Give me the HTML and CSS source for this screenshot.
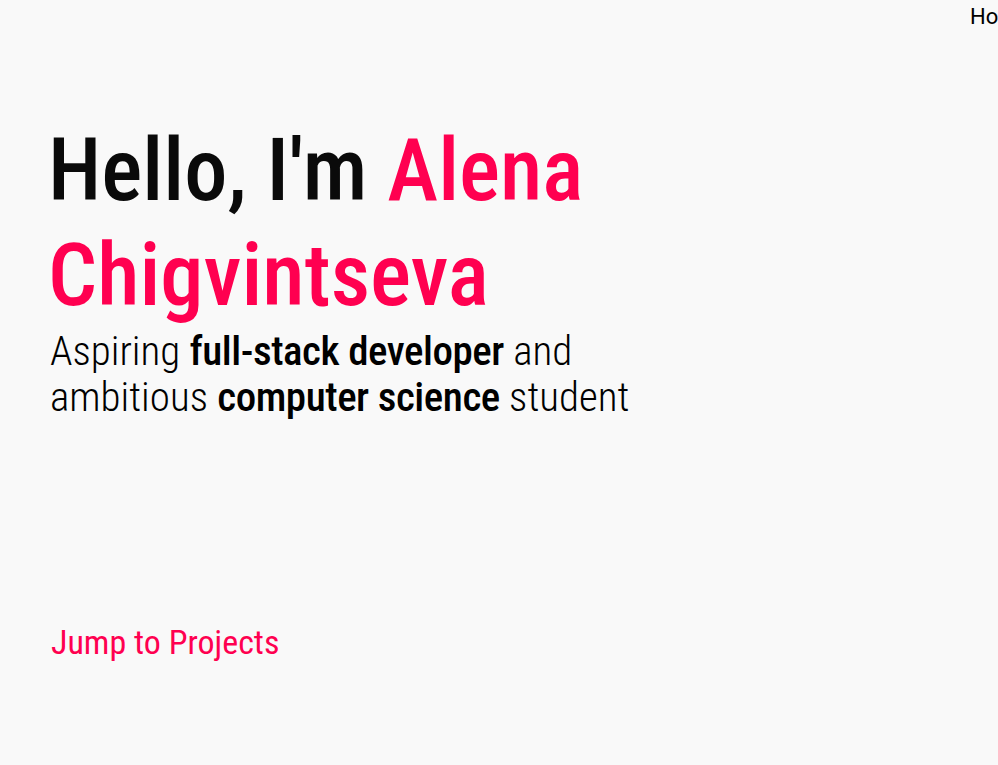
FILE: index.html
```html
<!DOCTYPE html>
<html lang="en">
<head>
    <meta charset="UTF-8">
    <meta name="viewport" content="width=device-width, initial-scale=1.0">
    <title>Alena Chigvintseva</title>
    <link rel="stylesheet" href="styles.css">
</head>
<body>
    <header class="topbar">
        <nav>
            <ul class="nav-links">
                <li><a href="#">Home</a></li>
                <li><a href="#projects">Projects</a></li>
                <li><a href="#contact">Contact</a></li>
            </ul>
        </nav>
    </header>

    <main>
        <!-- Intro -->
        <section class="intro">
            <h1>Hello, I'm <span class="accent">Alena Chigvintseva</span></h1>
            <p class="tagline">Aspiring <strong>full-stack developer</strong> and ambitious <strong>computer science</strong> student</p>
        </section>

        <a class="jump" href="#projects">Jump to Projects</a>
    </main>
</body>
</html>
```

FILE: styles.css
```css
/* General */
body {
    font-family: 'Roboto Condensed', 'Roboto', sans-serif;
    font-stretch: condensed;
    background-color: #f9f9f9;
    color: #000000;
    margin: 0;
    overflow-x: hidden;
}

a {
    text-decoration: none;
    color: inherit;
}

/* Top navigation */
.topbar {
    padding: 4px 0 0 970px;
    white-space: nowrap;
}

.nav-links {
    display: flex;
    gap: 24px;
    list-style: none;
    margin: 0;
    padding: 0;
    font-family: 'Roboto', sans-serif;
    font-stretch: normal;
    font-size: 22px;
    line-height: 26px;
}

/* Intro */
main {
    padding: 0 48px;
}

.intro {
    padding-top: 88px;
    max-width: 600px;
}

h1 {
    font-size: 86.5px;
    line-height: 105px;
    font-weight: 500;
    margin: 0;
    color: #0a0a0a;
}

.accent {
    color: #ff0050;
}

.tagline {
    font-size: 41px;
    line-height: 46px;
    font-weight: 300;
    margin: 0 0 0 2px;
}

.tagline strong {
    font-weight: 500;
    letter-spacing: -0.45px;
}

.jump {
    display: inline-block;
    margin-top: 202px;
    margin-left: 3px;
    font-size: 34px;
    color: #ff0050;
}
```
